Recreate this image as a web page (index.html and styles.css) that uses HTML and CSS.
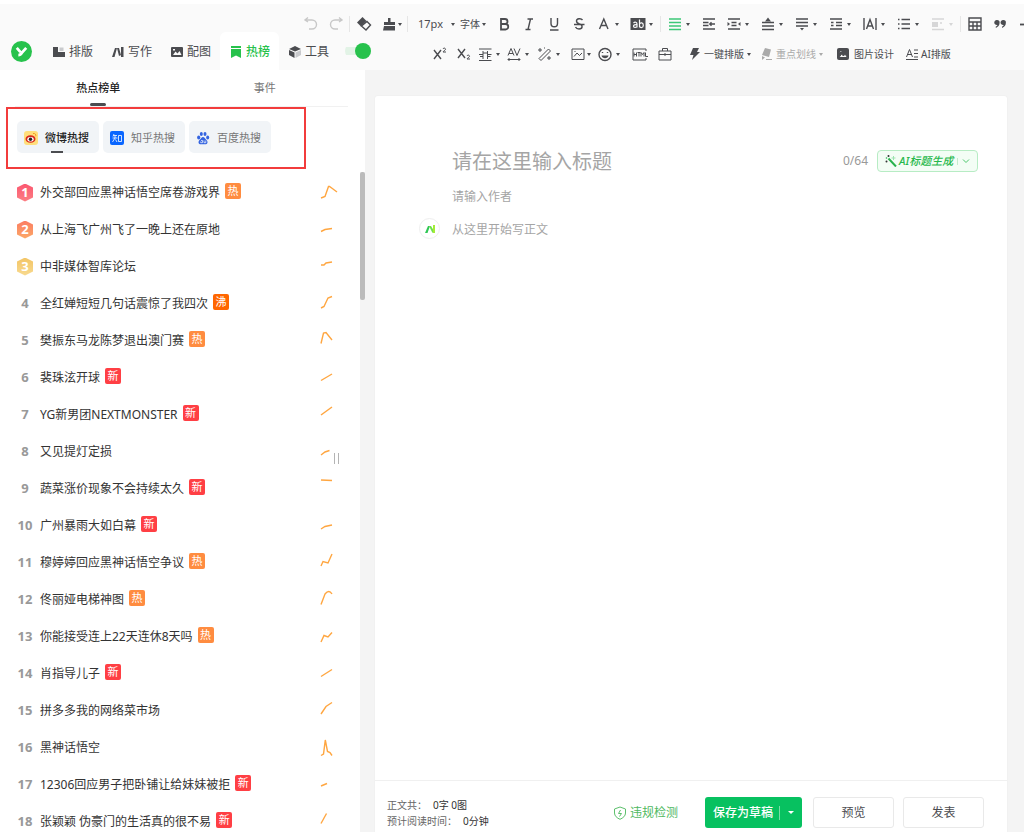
FILE: index.html
```html
<!DOCTYPE html>
<html lang="zh-CN">
<head>
<meta charset="utf-8">
<meta name="viewport" content="width=device-width, initial-scale=1">
<title>热点榜单</title>
<link rel="stylesheet" href="styles.css">
</head>
<body>
<header class="header">
  <div class="tools tools-top">
    <button class="tool faint" aria-label="撤销"><svg viewBox="0 0 18 18"><path d="M6 2.500 3 5l3 2M3.500 5H10a4.500 4.500 0 0 1 0 9H7"/></svg></button>
    <button class="tool faint" aria-label="重做"><svg viewBox="0 0 18 18"><path d="m12 2.500 3 2.500-3 2M14.500 5H8a4.500 4.500 0 0 0 0 9h3"/></svg></button>
    <i class="sep"></i>
    <button class="tool" aria-label="清除格式"><svg viewBox="0 0 18 18"><path class="fill" d="M2 7.500 7.500 2l4 4L6 11.500z"/><path d="m12 6.500 3.500 3.500-4.500 5-4.500-4z"/></svg></button>
    <button class="tool drop brush" aria-label="格式刷"><svg viewBox="0 0 18 18"><path class="fill" d="M8 3h2.500v4H15v3H4V7h4zM4 11h11v4.500H3z"/></svg><i class="caret"></i></button>
    <i class="sep"></i>
    <label class="pick size"><select aria-label="字号"><option>17px</option></select><i class="caret"></i></label>
    <label class="pick font"><select aria-label="字体"><option>字体</option></select><i class="caret"></i></label>
    <button class="tool" aria-label="加粗"><svg viewBox="0 0 18 18"><path class="bold" d="M6 4h4a2.400 2.400 0 0 1 0 5H6zM6 9h4.500a2.700 2.700 0 0 1 0 5.500H6z"/></svg></button>
    <button class="tool" aria-label="斜体"><svg viewBox="0 0 18 18"><path d="M7.500 4H13M5.500 14.500h5M10.500 4 8 14.500"/></svg></button>
    <button class="tool" aria-label="下划线"><svg viewBox="0 0 18 18"><path d="M6 3v5.500a3 3 0 0 0 6.500 0V3M5 15h8.500"/></svg></button>
    <button class="tool" aria-label="删除线"><svg viewBox="0 0 18 18"><path d="M12.500 5C11 3 6.500 3.500 6.500 6c0 1.500 1.500 2.500 3 3 3.500 1 3.500 5-.5 5-2 0-3-1-3.500-2M4 9.500h10.500"/></svg></button>
    <button class="tool drop" aria-label="文字颜色"><svg viewBox="0 0 18 18"><path d="m4.500 14 4.300-10L13 14M6 10.500h5.500"/></svg><i class="caret"></i></button>
    <button class="tool drop" aria-label="背景色"><svg viewBox="0 0 18 18"><path class="fill" d="M1.500 3h15v12h-15z"/><path class="knock" d="M4.500 8c1.500-1.500 3.500-.7 3.500 1v3.500M8 9.700c-2-.2-3.500.3-3.500 1.500 0 1.700 2.700 1.500 3.500.3M10.500 4.500v8M10.500 9c1-2 3.800-1.300 3.800 1.200 0 2.800-2.800 3-3.800 1"/></svg><i class="caret"></i></button>
    <i class="sep"></i>
    <button class="tool drop green" aria-label="对齐"><svg viewBox="0 0 18 18"><path d="M3 4h12M3 7.500h12M3 11h12M3 14.500h12"/></svg><i class="caret"></i></button>
    <button class="tool" aria-label="首行缩进"><svg viewBox="0 0 18 18"><path d="M3 4h12M3 7.500h5.500M3 10.500h5.500M3 14h12M10 9h5M11.500 7.300 9.800 9l1.700 1.700"/></svg></button>
    <button class="tool drop" aria-label="两端缩进"><svg viewBox="0 0 18 18"><path d="M3 4h12M6.500 7.500h5M6.500 10.500h5M3 14h12"/><path class="fill" d="m2.500 7 2.500 2-2.500 2zM15.500 7 13 9l2.500 2z"/></svg><i class="caret"></i></button>
    <button class="tool drop" aria-label="段前距"><svg viewBox="0 0 18 18"><path d="M3 7.500h12M3 11h12M3 14.500h12"/><path class="fill" d="m9 2.500 3 4H6z"/></svg><i class="caret"></i></button>
    <button class="tool drop" aria-label="段后距"><svg viewBox="0 0 18 18"><path d="M3 4h12M3 7.500h12M3 11h12"/><path class="fill" d="M7 13h4l-2 2.500z"/></svg><i class="caret"></i></button>
    <button class="tool drop" aria-label="行高"><svg viewBox="0 0 18 18"><path d="M3 4h12M9 7.500h6M9 10.500h6M3 14h12M4 7.500h2.500M4 10.500h2.500"/></svg><i class="caret"></i></button>
    <button class="tool drop" aria-label="字间距"><svg viewBox="0 0 18 18"><path d="M3 3v12M15 3v12M5.500 14 9 4.500l3.500 9.500M6.500 11h5"/></svg><i class="caret"></i></button>
    <button class="tool drop" aria-label="列表"><svg viewBox="0 0 18 18"><path d="M6.500 4.500H15M6.500 9H15M6.500 13.500H15M3 4.500h1.500M3 9h1.500M3 13.500h1.500"/></svg><i class="caret"></i></button>
    <button class="tool drop ghost" aria-label="图文环绕"><svg viewBox="0 0 18 18"><path class="fill" d="M3 7h6v5H3z"/><path d="M3 4h12M11 8h2M3 14.500h12"/></svg><i class="caret"></i></button>
    <i class="sep"></i>
    <button class="tool" aria-label="表格"><svg viewBox="0 0 18 18"><path d="M3 3h12v12H3zM3 7h12M3 11h12M7 7v8M11 7v8"/></svg></button>
    <button class="tool" aria-label="引用"><svg viewBox="0 0 18 18"><path class="fill" d="M6 5a2.600 2.600 0 0 1 2.600 2.800c0 2.700-1.500 4.200-3.800 5.200v-1.500c1-.6 1.400-1 1.600-1.600A2.500 2.500 0 1 1 6 5zM12.300 5a2.600 2.600 0 0 1 2.600 2.800c0 2.700-1.500 4.200-3.800 5.200v-1.500c1-.6 1.400-1 1.600-1.600a2.500 2.500 0 1 1-.4-4.900z"/></svg></button>
    <button class="tool" aria-label="分割线"><svg viewBox="0 0 18 18"><path class="bold" d="M4 9.500h12"/></svg></button>
  </div>
  <div class="header-row">
    <nav class="nav">
      <a class="logo" href="#" aria-label="首页"><svg viewBox="0 0 20 20"><circle cx="10" cy="10" r="10" fill="#27c24c"/><path d="m5.500 6.500 3.500 4M14.500 6.500 10.500 11c-1 1.700-1.500 2.500-3.500 2.500" fill="none" stroke="#fff" stroke-width="2.600"/></svg></a>
      <a class="nav-item" href="#"><svg viewBox="0 0 12 12"><path class="fill" d="M0 1h5v5h7v5H0z"/><path fill="#c9cacd" d="M6.500 1.500h4v3.500h-4z"/></svg>排版</a>
      <a class="nav-item" href="#"><svg viewBox="0 0 12 12"><path class="fill" d="M0 11 3 2h2L2.500 11zM5 2h2l2 7-2 1zM9 1h2.500v10H9z"/></svg>写作</a>
      <a class="nav-item" href="#"><svg viewBox="0 0 12 12"><rect class="fill" y="1" width="12" height="10" rx="1"/><path fill="#fafafa" d="m2 9 2.500-3.500 2 2L8.500 5 10.500 9zM2 3h2v1.500H2z"/></svg>配图</a>
      <a class="nav-item active" href="#" aria-current="page"><svg viewBox="0 0 12 12"><path fill="#27c24c" d="M1 3h10v9L6 9.500 1 12zM1 0h10v2H1z"/></svg>热榜</a>
      <a class="nav-item" href="#"><svg viewBox="0 0 12 12"><path class="fill" d="m0 3 6-3 6 3-6 2.500zM0 4l5.500 2.500V12L0 9z"/><path fill="#c9cacd" d="m6.500 6.500 5.500-2.500v5L6.500 12z"/></svg>工具</a>
      <input class="switch" type="checkbox" checked aria-label="切换">
    </nav>
    <div class="tools tools-bottom">
      <button class="tool" aria-label="上标"><svg viewBox="0 0 18 18"><path d="m4 5 7 9M11 5l-7 9"/><path class="thin" d="M13 4c.5-1.500 2.500-1 2.500.3 0 1-2.500 2-2.500 2.700h3"/></svg></button>
      <button class="tool" aria-label="下标"><svg viewBox="0 0 18 18"><path d="m3 4 7 9M10 4l-7 9"/><path class="thin" d="M12 11c.5-1.500 2.500-1 2.500.3 0 1-2.500 2-2.500 2.700h3"/></svg></button>
      <button class="tool drop narrow" aria-label="行间距"><svg viewBox="0 0 18 18"><path class="thin" d="M3 4h12.500M3 15.500h12.500M7 6v8M11.500 6v8M3 9.500h4M11.500 9.500h4M4 11.500h3M11.500 11.500h3M7 8h4.500"/></svg><i class="caret"></i></button>
      <button class="tool drop" aria-label="字距"><svg viewBox="0 0 18 18"><path class="thin" d="m3 10.500 3-7 3 7M4 8.500h4M9 3.500l3 7 3-7M3 14.500h12M4.500 13 3 14.500 4.500 16M13.500 13l1.500 1.500-1.500 1.500"/></svg><i class="caret"></i></button>
      <button class="tool drop wide" aria-label="魔术棒"><svg viewBox="0 0 18 18"><path class="thin" d="m3 13.500 9.500-9.500 2 2L5 15.500zM4 3v4M2 5h4M13 11v4M11 13h4M8 3h1"/></svg><i class="caret"></i></button>
      <button class="tool drop tight" aria-label="图片"><svg viewBox="0 0 18 18"><path class="thin" d="M3 4h12v10.500H3zM5 11.500 8 8l2.500 2.500L13 8M5.500 6.500h1"/></svg><i class="caret"></i></button>
      <button class="tool drop" aria-label="表情"><svg viewBox="0 0 18 18"><circle cx="9" cy="9.500" r="6"/><path d="M6.500 7v1M11.500 7v1"/><path class="fill" d="M5.500 10.500h7c-.5 3.500-6.500 3.500-7 0z"/></svg><i class="caret"></i></button>
      <button class="tool" aria-label="HTML"><svg viewBox="0 0 18 18"><path class="thin" d="M15 6V4H2v11h13v-2M3 7.500v4M5.500 7.500v4M3 9.500h2.500M6.500 7.500h3M8 7.500v4M10 11.500v-4l1.500 2 1.500-2v4M14.500 7.500v4H17"/></svg></button>
      <button class="tool" aria-label="工具箱"><svg viewBox="0 0 18 18"><path class="thin" d="M3 6h12v9H3zM6.500 6V3.500h5V6M3 9.500h12M9 8v3"/></svg></button>
      <button class="action first"><svg viewBox="0 0 12 12"><path class="fill" d="M4 0h6L8 4h3L3 12l1.500-5H1z"/></svg>一键排版<i class="caret"></i></button>
      <button class="action muted"><svg viewBox="0 0 12 12"><path class="fill" d="m4 0 6 1.500L8 9 1 7zM1 8l3 1.500L1 12zM5 11h6v1H5z"/></svg>重点划线<i class="caret"></i></button>
      <button class="action design"><svg viewBox="0 0 12 12"><rect class="fill" width="12" height="12" rx="2"/><path fill="#fafafa" d="m2 9.500 2.500-3.500 2 2L8 6l2.500 3.500zM2.500 3H5v1.500H2.500z"/></svg>图片设计</button>
      <button class="action"><svg viewBox="0 0 12 12"><path d="m.5 9 3-7.500L6.500 9M1.500 6.500h4M8 2h4M8 5.500h4M8 9h4M0 11.500h12"/></svg>AI排版</button>
    </div>
  </div>
</header>

<main class="workspace">
  <aside class="side">
    <div class="side-tabs">
      <button class="side-tab on">热点榜单</button>
      <button class="side-tab">事件</button>
    </div>
    <div class="sources">
      <button class="source on"><svg viewBox="0 0 14 14"><rect width="14" height="14" rx="3" fill="#ffdf7c"/><path d="M9 2.500c2-.5 3.300 1 2.800 2.800" fill="none" stroke="#f59a23"/><ellipse cx="6.500" cy="8" rx="5" ry="3.800" fill="#d9291c"/><ellipse cx="6.500" cy="8.200" rx="3.200" ry="2.300" fill="#fff"/><circle cx="6.500" cy="8.200" r="1.700" fill="#222"/></svg>微博热搜</button>
      <button class="source"><svg viewBox="0 0 14 14"><rect width="14" height="14" rx="2" fill="#0a66ff"/><path d="M4 3 3 5.500M3.500 4.500H7M2.500 7h5M5 4.500V7l-2.500 4M5.500 8.500 7 11M8.500 4.500h3v6h-3z" fill="none" stroke="#fff" stroke-width=".8"/></svg>知乎热搜</button>
      <button class="source"><svg viewBox="0 0 14 14" fill="#3464e0"><ellipse cx="2.700" cy="6.500" rx="1.600" ry="2"/><ellipse cx="5.300" cy="3" rx="1.500" ry="2"/><ellipse cx="9" cy="3" rx="1.500" ry="2"/><ellipse cx="11.700" cy="6.500" rx="1.500" ry="2"/><path d="M7 6c1.500 0 2 1.500 3.500 3 2 2 .8 4.500-1.500 4.300-1.300-.2-2.500-.2-3.800 0C2.500 13.500 1.700 11 3.500 9 5 7.500 5.500 6 7 6z"/><path d="M5 9.500h1.500v2.200H4.700v-1.200M8 9.500v2.200h1.800V9.500" fill="none" stroke="#fff" stroke-width=".7"/></svg>百度热搜</button>
    </div>
    <div class="board">
      <ol class="list">
        <li><span class="medal m1">1</span><a href="#">外交部回应黑神话悟空席卷游戏界</a><b class="tag hot">热</b><svg class="spark" viewBox="0 0 18 24"><path d="M1 17 5 15.500 8.500 5.500h1L13 8l4 3"/></svg></li>
        <li><span class="medal m2">2</span><a href="#">从上海飞广州飞了一晚上还在原地</a><svg class="spark" viewBox="0 0 18 24"><path d="m1 13.500 4-2 7-1"/></svg></li>
        <li><span class="medal m3">3</span><a href="#">中非媒体智库论坛</a><svg class="spark" viewBox="0 0 18 24"><path d="M1 10h3l2-2 6-1"/></svg></li>
        <li><span class="num">4</span><a href="#">全红婵短短几句话震惊了我四次</a><b class="tag boil">沸</b><svg class="spark" viewBox="0 0 18 24"><path d="m1 16 3-1.500L8 6l4-1.500"/></svg></li>
        <li><span class="num">5</span><a href="#">樊振东马龙陈梦退出澳门赛</a><b class="tag hot">热</b><svg class="spark" viewBox="0 0 18 24"><path d="M1 14.500 3.500 4 6 3.500l6 7.500"/></svg></li>
        <li><span class="num">6</span><a href="#">裴珠泫开球</a><b class="tag new">新</b><svg class="spark" viewBox="0 0 18 24"><path d="M1 14.500 12 8"/></svg></li>
        <li><span class="num">7</span><a href="#">YG新男团NEXTMONSTER</a><b class="tag new">新</b><svg class="spark" viewBox="0 0 18 24"><path d="m1 12 11-8"/></svg></li>
        <li><span class="num">8</span><a href="#">又见提灯定损</a><svg class="spark" viewBox="0 0 18 24"><path d="m1 15 4-3 4.500-1.500"/></svg></li>
        <li><span class="num">9</span><a href="#">蔬菜涨价现象不会持续太久</a><b class="tag new">新</b><svg class="spark" viewBox="0 0 18 24"><path d="m1 3 11 .5"/></svg></li>
        <li><span class="num">10</span><a href="#">广州暴雨大如白幕</a><b class="tag new">新</b><svg class="spark" viewBox="0 0 18 24"><path d="m1 15 4-2.500 7-1.500"/></svg></li>
        <li><span class="num">11</span><a href="#">穆婷婷回应黑神话悟空争议</a><b class="tag hot">热</b><svg class="spark" viewBox="0 0 18 24"><path d="m1 15 2-4.500L8 12l4-9"/></svg></li>
        <li><span class="num">12</span><a href="#">佟丽娅电梯神图</a><b class="tag hot">热</b><svg class="spark" viewBox="0 0 18 24"><path d="M1 16.500 5 6q4-5 7 0"/></svg></li>
        <li><span class="num">13</span><a href="#">你能接受连上22天连休8天吗</a><b class="tag hot">热</b><svg class="spark" viewBox="0 0 18 24"><path d="m1 17 3-6.500L8 12l4-4.500"/></svg></li>
        <li><span class="num">14</span><a href="#">肖指导儿子</a><b class="tag new">新</b><svg class="spark" viewBox="0 0 18 24"><path d="m1 14.500 11-7"/></svg></li>
        <li><span class="num">15</span><a href="#">拼多多我的网络菜市场</a><svg class="spark" viewBox="0 0 18 24"><path d="m1 15 5-7.500 6-4"/></svg></li>
        <li><span class="num">16</span><a href="#">黑神话悟空</a><svg class="spark" viewBox="0 0 18 24"><path d="m1 19.500 2.500-1.500L5.300 4 7.500 15.500l2.500 1 2 3"/></svg></li>
        <li><span class="num">17</span><a href="#">12306回应男子把卧铺让给妹妹被拒</a><b class="tag new">新</b><svg class="spark" viewBox="0 0 18 24"><path d="m1 13 6-2.500"/></svg></li>
        <li><span class="num">18</span><a href="#">张颖颖 伪豪门的生活真的很不易</a><b class="tag new">新</b><svg class="spark" viewBox="0 0 18 24"><path d="m1 13.500 5.500-10"/></svg></li>
      </ol>
      <div class="scroll"><i class="thumb"></i></div>
      <i class="grip"></i>
    </div>
  </aside>

  <section class="editor">
    <div class="title-row">
      <input class="title" type="text" placeholder="请在这里输入标题" aria-label="标题">
      <span class="count">0/64</span>
      <button class="ai"><svg class="wand" viewBox="0 0 12 12"><path d="m3.500 3.500 7.500 8" stroke="#27b24c" stroke-width="2"/><path d="M8.500 1v4M6.500 3h4" stroke="#9be3ae"/><circle cx="1.500" cy="6.500" r="1" fill="#333"/><circle cx="3.500" cy="1" r="1" fill="#333"/><circle cx="1.500" cy="3" r=".8" fill="#27b24c"/></svg><em>AI标题生成</em><i class="split"></i><svg class="chev" viewBox="0 0 8 8"><path d="m1 2.500 3 3 3-3" fill="none" stroke="#4cc76c"/></svg></button>
    </div>
    <input class="author" type="text" placeholder="请输入作者" aria-label="作者">
    <div class="body-row">
      <button class="assist" aria-label="AI写作"><svg viewBox="0 0 12 12"><path d="M1 10 4 3h2l-2.500 7z" fill="#2fc755"/><path d="M5 3h2l3 5-1.500 2z" fill="#6fe04a"/><path d="M9 2h2v8H9z" fill="#a4ec35"/></svg></button>
      <textarea class="content" placeholder="从这里开始写正文" aria-label="正文"></textarea>
    </div>
    <footer class="foot">
      <div class="stats">
        <p>正文共：<span>0字 0图</span></p>
        <p>预计阅读时间：<span>0分钟</span></p>
      </div>
      <a class="check" href="#"><svg viewBox="0 0 14 14"><path d="m7 1 5.500 2v4c0 3-2.500 5-5.500 6.300C4 12 1.500 10 1.500 7V3z" fill="none" stroke="#5cc06c"/><path d="M7.500 4 5.500 7.500h3L6.500 10.500" fill="none" stroke="#5cc06c"/></svg>违规检测</a>
      <button class="save">保存为草稿<i class="bar"></i><i class="caret"></i></button>
      <button class="plain">预览</button>
      <button class="plain">发表</button>
    </footer>
  </section>
</main>
</body>
</html>
```

FILE: styles.css
```css
* { box-sizing: border-box; }

body {
  margin: 0;
  height: 100vh;
  overflow: hidden;
  display: flex;
  flex-direction: column;
  background: #f4f4f4;
  color: #4b4c50;
  font: 12px/16px "Noto Sans", "Noto Sans CJK SC", sans-serif;
}

button, input, select, textarea {
  margin: 0;
  padding: 0;
  border: 0;
  background: none;
  color: inherit;
  font: inherit;
  outline: 0;
}

button { cursor: pointer; white-space: nowrap; }
a { color: inherit; text-decoration: none; }
svg { display: block; flex: none; }
.fill { fill: #4b4c50; stroke: none; }

/* header */
.header {
  flex: none;
  border-top: 4px solid #fff;
  padding-top: 12px;
  background: #fafafa;
  overflow: hidden;
}

.header-row { display: flex; height: 38px; }

.tools { display: flex; align-items: center; font-size: 10px; }
.tools-top { height: 16px; padding-left: 298px; }
.tools-bottom { padding: 6px 0 0 53px; }

.tool {
  flex: none;
  display: flex;
  align-items: center;
  justify-content: center;
  width: 25px;
  height: 18px;
}

.tool svg {
  width: 18px;
  height: 18px;
  fill: none;
  stroke: #4b4c50;
  stroke-width: 1.4;
}

.tool .bold { stroke-width: 1.8; }
.tool .thin { stroke-width: 1; }
.tool .knock { stroke: #fafafa; stroke-width: 1.2; }
.tool.faint svg { stroke: #c8c8c8; }
.tool.green svg { stroke: #3cc877; }
.tool.ghost { opacity: 0.2; }
.tool.drop { width: 34px; justify-content: flex-start; gap: 2px; padding-left: 4px; }
.tool.drop.brush { width: 30px; gap: 0; }
.tools-bottom .tool.drop { width: 31px; padding-left: 0; }
.tools-bottom .tool.narrow { width: 29px; }
.tools-bottom .tool.wide { width: 33px; }
.tools-bottom .tool.tight { width: 27px; gap: 0; }

.caret {
  flex: none;
  width: 4px;
  border: 2px solid transparent;
  border-top: 3px solid #4b4c50;
  border-bottom: 0;
}

.sep { flex: none; width: 1px; height: 16px; margin: 0 1px; background: #e6e6e6; }

.pick { flex: none; display: flex; align-items: center; }
.pick select { appearance: none; }
.pick.size { width: 49px; gap: 8px; padding-left: 9px; font-size: 11px; }
.pick.font { width: 33px; gap: 2px; padding-left: 2px; }

.action { flex: none; display: flex; align-items: center; gap: 3px; margin-right: 8px; }
.action svg { width: 12px; height: 12px; fill: none; stroke: #4b4c50; }
.action.first { margin: 0 10px 0 12px; }
.action.design { margin: 0 12px 0 6px; gap: 5px; }
.action.muted { color: #aaa; }
.action.muted .fill { fill: #aaa; }
.action.muted .caret { border-top-color: #aaa; }

.nav { flex: none; display: flex; align-items: center; width: 373px; padding-left: 11px; }
.logo { margin-right: 11px; }
.logo svg { width: 21px; height: 21px; }

.nav-item {
  flex: none;
  display: flex;
  align-items: center;
  gap: 4px;
  width: 59px;
  height: 38px;
  padding: 1px 0 0 10px;
}

.nav-item svg { width: 12px; height: 12px; }

.nav-item.active {
  border-radius: 6px 6px 0 0;
  background: #fff;
  color: #27c24c;
  font-weight: 500;
}

.switch {
  appearance: none;
  display: flex;
  align-items: center;
  justify-content: flex-end;
  width: 26px;
  height: 16px;
  margin-left: 7px;
  border-radius: 8px;
  background: linear-gradient(#e2f3e6, #e2f3e6) center / 100% 8px no-repeat;
}

.switch::after { content: ""; width: 16px; height: 16px; border-radius: 50%; background: #27c24c; }

/* ranking panel */
.workspace { flex: 1; min-height: 0; display: flex; }

.side {
  flex: none;
  display: flex;
  flex-direction: column;
  width: 365px;
  background: #fff;
  font-size: 11px;
}

.side-tabs {
  flex: none;
  display: grid;
  grid-template-columns: 1fr 1fr;
  height: 37px;
  margin: 0 17px 0 15px;
  border-bottom: 1px solid #f1f1f1;
}

.side-tab {
  display: flex;
  flex-direction: column;
  align-items: center;
  justify-content: space-between;
  padding-top: 10px;
  color: #777;
}

.side-tab::after { content: ""; width: 16px; height: 3px; border-radius: 2px; }
.side-tab.on { color: #222; font-weight: 500; }
.side-tab.on::after { background: #4b4c50; }

.sources {
  flex: none;
  display: flex;
  gap: 4px;
  width: 300px;
  margin-left: 6px;
  padding: 12px 9px 14px;
  border: 2px solid #f23c3c;
}

.source {
  display: flex;
  position: relative;
  align-items: center;
  gap: 7px;
  width: 82px;
  height: 32px;
  padding: 1px 0 0 7px;
  border-radius: 5px;
  background: #f1f4f7;
  color: #777;
}

.source svg { width: 14px; height: 14px; }
.source.on { color: #222; font-weight: 500; }

.source.on::after {
  content: "";
  position: absolute;
  left: 34px;
  bottom: 0;
  width: 12px;
  height: 2px;
  background: #4b4c50;
}

.board { flex: 1; min-height: 0; display: flex; position: relative; padding-top: 3px; }

.list {
  flex: 1;
  margin: 0;
  padding: 2px 22px 0 17px;
  list-style: none;
  overflow: hidden;
  color: #333;
  font-size: 12px;
}

.list li { display: flex; align-items: center; height: 37px; }

.num, .medal {
  flex: none;
  width: 16px;
  height: 18px;
  margin-right: 7px;
  text-align: center;
  font: 700 13px/16px "Open Sans", sans-serif;
  color: #999;
}

.medal {
  color: #fff;
  clip-path: polygon(50% 0, 100% 22%, 100% 78%, 50% 100%, 0 78%, 0 22%);
}

.m1 { background: linear-gradient(#fb5770, #fc8084); }
.m2 { background: linear-gradient(#fb7d62, #fca968); }
.m3 { background: linear-gradient(#f3c566, #f8da90); }

.tag {
  width: 16px;
  height: 16px;
  margin: 0 0 4px 5px;
  border-radius: 2px;
  color: #fff;
  font-size: 11px;
  font-weight: 400;
  text-align: center;
}

.hot { background: #ff8c40; }
.boil { background: #ff6600; }
.new { background: #ff3f44; }

.spark { width: 18px; height: 24px; margin-left: auto; fill: none; stroke: #ffa640; stroke-width: 1.4; }

.scroll { width: 5px; background: #f4f4f4; }
.thumb { display: block; height: 128px; border-radius: 2px; background: #bbb; }

.grip {
  position: absolute;
  right: 26px;
  top: 284px;
  width: 5px;
  height: 11px;
  border: solid #b4b4b4;
  border-width: 0 1px;
}

/* editor */
.editor {
  flex: 1;
  min-width: 0;
  display: flex;
  flex-direction: column;
  margin: 25px 16px 0 9px;
  padding-top: 51px;
  border: 1px solid #f1f1f1;
  border-bottom: 0;
  border-radius: 4px 4px 0 0;
  background: #fff;
}

::placeholder { color: #a5a5a5; opacity: 1; }

.title-row { display: flex; align-items: center; height: 28px; padding: 0 29px 0 77px; }
.title { flex: 1; min-width: 0; height: 28px; font-size: 20px; }
.count { margin-right: 9px; color: #999; font-size: 12px; }

.ai {
  display: flex;
  align-items: center;
  width: 101px;
  height: 22px;
  padding: 0 7px;
  border: 1px solid #b7ecc4;
  border-radius: 4px;
  background: #f3fdf5;
  color: #27b84c;
  font-size: 11px;
  font-weight: 500;
}

.wand { width: 12px; height: 12px; margin-right: 2px; fill: none; }
.split { width: 1px; height: 7px; margin: 0 4px; background: #c4eccd; }
.chev { width: 8px; height: 8px; }

.author { height: 20px; margin: 11px 29px 0 77px; font-size: 12px; }

.body-row { flex: 1; min-height: 0; display: flex; gap: 12px; padding: 12px 29px 0 44px; }

.assist {
  flex: none;
  display: grid;
  place-items: center;
  width: 21px;
  height: 21px;
  border: 1px solid #eee;
  border-radius: 50%;
}

.assist svg { width: 12px; height: 12px; }
.content { flex: 1; padding-top: 4px; resize: none; font-size: 12px; }

.foot {
  flex: none;
  display: flex;
  align-items: center;
  height: 52px;
  padding: 12px 23px 0 12px;
  border-top: 1px solid #f0f0f0;
}

.stats { margin-right: auto; color: #666; font-size: 10px; }
.stats p { margin: 0; }
.stats span { margin-left: 6px; color: #333; }

.check { display: flex; align-items: center; gap: 3px; margin-right: 27px; color: #4fb95f; }
.check svg { width: 14px; height: 14px; }

.save, .plain { height: 31px; border-radius: 3px; }

.save {
  display: flex;
  align-items: center;
  justify-content: center;
  width: 97px;
  margin-right: 2px;
  background: #07c160;
  color: #fff;
  font-weight: 500;
}

.save .bar { width: 1px; height: 14px; margin: 0 8px 0 6px; background: #7bdca6; }
.save .caret { width: 6px; border-width: 3px 3px 0; border-top-color: #fff; }
.plain { width: 81px; margin-left: 9px; border: 1px solid #e9e9e9; background: #fff; }
```
